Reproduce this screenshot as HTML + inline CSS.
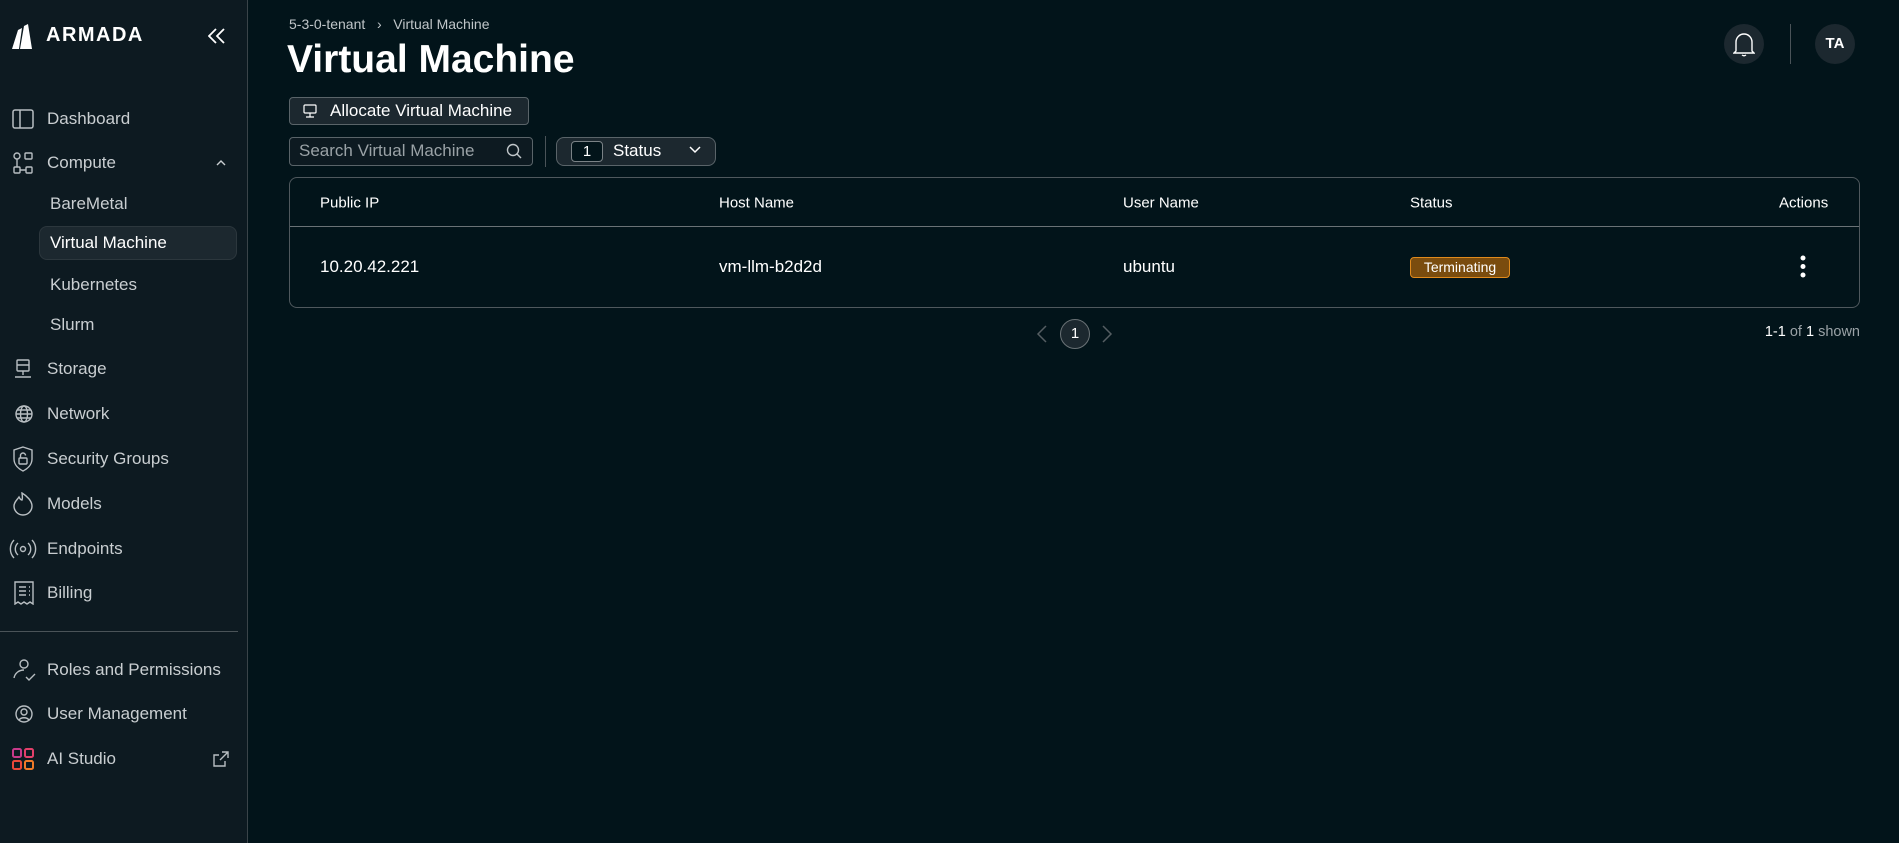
<!DOCTYPE html>
<html><head><meta charset="utf-8"><style>
*{box-sizing:border-box;margin:0;padding:0}
body{width:1899px;height:843px;background:#02141a;font-family:"Segoe UI","Liberation Sans",sans-serif;color:#fff;position:relative;overflow:hidden}
.side{position:absolute;left:0;top:0;width:248px;height:843px;background:#0d1a21;border-right:1px solid #3a4449}
.it{position:absolute;left:47px;font-size:17px;color:#c9ced1;transform:translateY(-50%);white-space:nowrap}
.ic{position:absolute;left:12px;transform:translateY(-50%)}
.sub{left:50px}
.abs{position:absolute}
.th{position:absolute;top:203px;transform:translateY(-50%);font-size:15px;color:#fff}
.td{position:absolute;top:267px;transform:translateY(-50%);font-size:17px;color:#fff}
</style></head><body>
<div class="side">
 <svg class="abs" style="left:10px;top:22px" width="30" height="28" viewBox="0 0 30 28"><path d="M2 27 L8 8 L12 6 L9 27Z M10 27 L14 4 L18 2 L22 27Z" fill="#fff"/></svg>
 <div class="abs" style="left:46px;top:24px;font-size:20px;font-weight:bold;letter-spacing:1.5px">ARMADA</div>
 <svg class="abs" style="left:208px;top:28px" width="18" height="16" viewBox="0 0 18 16" fill="none" stroke="#fff" stroke-width="1.8"><path d="M8 1 1 8l7 7M16 1 9 8l7 7"/></svg>
 <div class="abs" style="left:39px;top:226px;width:198px;height:34px;background:#1c282f;border:1px solid #2c373d;border-radius:8px"></div>
 <svg class="ic" style="top:119px" width="22" height="20" viewBox="0 0 22 20"><rect x="1" y="1" width="20" height="18" rx="2" fill="none" stroke="#b8bec2" stroke-width="1.5"/><line x1="8" y1="1" x2="8" y2="19" stroke="#b8bec2" stroke-width="1.5"/></svg>
 <div class="it" style="top:119px">Dashboard</div>
 <svg class="ic" style="top:163px" width="22" height="22" viewBox="0 0 22 22" fill="none" stroke="#b8bec2" stroke-width="1.4"><circle cx="5" cy="4" r="3"/><rect x="13" y="1" width="7" height="6" rx="1"/><rect x="2" y="15" width="6" height="6" rx="1"/><rect x="14" y="15" width="6" height="6" rx="1"/><path d="M5 7v8M8 18h6"/></svg>
 <div class="it" style="top:163px">Compute</div>
 <svg class="abs" style="left:216px;top:160px" width="10" height="6" viewBox="0 0 10 6" fill="none" stroke="#c9ced1" stroke-width="1.4"><path d="M1 5l4-4 4 4"/></svg>
 <div class="it sub" style="top:204px">BareMetal</div>
 <div class="it sub" style="top:243px;color:#fff">Virtual Machine</div>
 <div class="it sub" style="top:285px">Kubernetes</div>
 <div class="it sub" style="top:325px">Slurm</div>
 <svg class="ic" style="top:369px;left:14px" width="18" height="20" viewBox="0 0 18 20" fill="none" stroke="#b8bec2" stroke-width="1.4"><rect x="3" y="1" width="12" height="11" rx="1"/><path d="M3 6h12M9 12v4M1 18h16"/></svg>
 <div class="it" style="top:369px">Storage</div>
 <svg class="ic" style="top:414px;left:14px" width="20" height="20" viewBox="0 0 20 20" fill="none" stroke="#b8bec2" stroke-width="1.4"><circle cx="10" cy="10" r="8"/><ellipse cx="10" cy="10" rx="3.5" ry="8"/><path d="M2 10h16M3 6h14M3 14h14"/></svg>
 <div class="it" style="top:414px">Network</div>
 <svg class="ic" style="top:459px" width="22" height="26" viewBox="0 0 22 26" fill="none" stroke="#b8bec2" stroke-width="1.4"><path d="M11 1 L20 4 V13 C20 19 15 23 11 25 C7 23 2 19 2 13 V4Z"/><rect x="7" y="12" width="8" height="6" rx="1"/><path d="M8.5 12V9.5a2.5 2.5 0 0 1 5 0"/></svg>
 <div class="it" style="top:459px">Security Groups</div>
 <svg class="ic" style="top:504px" width="22" height="24" viewBox="0 0 22 24" fill="none" stroke="#b8bec2" stroke-width="1.4"><path d="M11 23a9 9 0 0 1-9-9c0-4 3-6 5-9 1 2 2 3 3 3 1-3 0-5 0-7 5 3 10 8 10 13a9 9 0 0 1-9 9z"/></svg>
 <div class="it" style="top:504px">Models</div>
 <svg class="ic" style="top:549px;left:9px" width="28" height="20" viewBox="0 0 28 20" fill="none" stroke="#b8bec2" stroke-width="1.4"><circle cx="14" cy="10" r="2.5"/><path d="M9 4a8 8 0 0 0 0 12M19 4a8 8 0 0 1 0 12M5 1a13 13 0 0 0 0 18M23 1a13 13 0 0 1 0 18"/></svg>
 <div class="it" style="top:549px">Endpoints</div>
 <svg class="ic" style="top:593px;left:14px" width="20" height="24" viewBox="0 0 20 24" fill="none" stroke="#b8bec2" stroke-width="1.4"><path d="M1 1h18v22l-3-2-3 2-3-2-3 2-3-2-3 2z"/><path d="M5 6h7M5 10h7M5 14h7M15 6h1M15 10h1M15 14h1"/></svg>
 <div class="it" style="top:593px">Billing</div>
 <div class="abs" style="left:0;top:631px;width:238px;height:1px;background:#4a5358"></div>
 <svg class="ic" style="top:670px" width="24" height="24" viewBox="0 0 24 24" fill="none" stroke="#b8bec2" stroke-width="1.4"><circle cx="12" cy="6" r="4"/><path d="M2 20c1-5 5-8 10-8M14 19l3 3 6-6"/></svg>
 <div class="it" style="top:670px">Roles and Permissions</div>
 <svg class="ic" style="top:714px;left:14px" width="20" height="20" viewBox="0 0 20 20" fill="none" stroke="#b8bec2" stroke-width="1.4"><circle cx="10" cy="10" r="8"/><circle cx="10" cy="8" r="3"/><path d="M5 16c2-3 8-3 10 0"/></svg>
 <div class="it" style="top:714px">User Management</div>
 <svg class="ic" style="top:759px" width="22" height="22" viewBox="0 0 22 22" fill="none" stroke-width="2"><rect x="1" y="1" width="8" height="8" rx="1.5" stroke="#c83a8a"/><rect x="13" y="1" width="8" height="8" rx="1.5" stroke="#e2406a"/><rect x="1" y="13" width="8" height="8" rx="1.5" stroke="#e8483a"/><rect x="13" y="13" width="8" height="8" rx="1.5" stroke="#f07a28"/></svg>
 <div class="it" style="top:759px">AI Studio</div>
 <svg class="abs" style="left:213px;top:751px" width="16" height="16" viewBox="0 0 16 16" fill="none" stroke="#b8bec2" stroke-width="1.4"><path d="M9 1h6v6M15 1 7 9M12 10v5H1V4h5"/></svg>
</div>

<div class="abs" style="left:289px;top:16px;font-size:14px;color:#c0c6c9">5-3-0-tenant &nbsp;&nbsp;&#8250;&nbsp;&nbsp; Virtual Machine</div>
<div class="abs" style="left:287px;top:38px;font-size:39px;font-weight:bold">Virtual Machine</div>
<div class="abs" style="left:289px;top:97px;width:240px;height:28px;background:#1c282f;border:1px solid #5a6469;border-radius:4px;font-size:17px;padding:3px 0 0 40px">Allocate Virtual Machine</div>
<svg class="abs" style="left:303px;top:104px" width="14" height="14" viewBox="0 0 14 14" fill="none" stroke="#fff" stroke-width="1.2"><rect x="1" y="1" width="12" height="8" rx="1"/><path d="M7 9v4M3 13h8"/></svg>
<div class="abs" style="left:289px;top:137px;width:244px;height:29px;border:1px solid #5a6469;border-radius:4px;background:#0d1a21;font-size:17px;color:#9aa2a6;padding:3px 0 0 9px">Search Virtual Machine</div>
<svg class="abs" style="left:506px;top:143px" width="16" height="16" viewBox="0 0 16 16" fill="none" stroke="#c0c6c9" stroke-width="1.4"><circle cx="7" cy="7" r="5.5"/><path d="M11 11l4 4"/></svg>
<div class="abs" style="left:545px;top:136px;width:1px;height:31px;background:#4a5358"></div>
<div class="abs" style="left:556px;top:137px;width:160px;height:29px;border:1px solid #5a6469;border-radius:8px;background:#1c282f"></div>
<div class="abs" style="left:571px;top:141px;width:32px;height:21px;border:1px solid #7a8286;border-radius:4px;background:#02141a;font-size:15px;text-align:center;line-height:19px">1</div>
<div class="abs" style="left:613px;top:141px;font-size:17px">Status</div>
<svg class="abs" style="left:689px;top:146px" width="12" height="8" viewBox="0 0 12 8" fill="none" stroke="#fff" stroke-width="1.5"><path d="M1 1l5 5 5-5"/></svg>

<div class="abs" style="left:289px;top:177px;width:1571px;height:131px;border:1px solid #4f585d;border-radius:8px"></div>
<div class="abs" style="left:290px;top:226px;width:1569px;height:1px;background:#6a7276"></div>
<div class="th" style="left:320px">Public IP</div>
<div class="th" style="left:719px">Host Name</div>
<div class="th" style="left:1123px">User Name</div>
<div class="th" style="left:1410px">Status</div>
<div class="th" style="left:1779px">Actions</div>
<div class="td" style="left:320px">10.20.42.221</div>
<div class="td" style="left:719px">vm-llm-b2d2d</div>
<div class="td" style="left:1123px">ubuntu</div>
<div class="abs" style="left:1410px;top:257px;width:100px;height:21px;background:#7a4c0e;border:1px solid #e08a1c;border-radius:4px;font-size:14px;text-align:center;line-height:19px">Terminating</div>
<svg class="abs" style="left:1800px;top:255px" width="6" height="24" viewBox="0 0 6 24" fill="#fff"><circle cx="3" cy="3" r="2.5"/><circle cx="3" cy="11.5" r="2.5"/><circle cx="3" cy="20" r="2.5"/></svg>

<svg class="abs" style="left:1036px;top:325px" width="12" height="18" viewBox="0 0 12 18" fill="none" stroke="#555e62" stroke-width="1.5"><path d="M10 1 2 9l8 8"/></svg>
<div class="abs" style="left:1060px;top:319px;width:30px;height:30px;border-radius:50%;background:#1c282f;border:1px solid #6a7276;font-size:15px;text-align:center;line-height:28px">1</div>
<svg class="abs" style="left:1101px;top:325px" width="12" height="18" viewBox="0 0 12 18" fill="none" stroke="#555e62" stroke-width="1.5"><path d="M2 1l8 8-8 8"/></svg>
<div class="abs" style="right:39px;top:324px;font-size:14.5px;color:#9aa2a6"><span style="color:#fff">1-1</span> of <span style="color:#fff">1</span> shown</div>

<div class="abs" style="left:1724px;top:24px;width:40px;height:40px;border-radius:50%;background:#1c282f"></div>
<svg class="abs" style="left:1733px;top:30px" width="22" height="28" viewBox="0 0 22 28" fill="none" stroke="#fff" stroke-width="1.4"><path d="M3 21V12a8 8 0 0 1 16 0v9l2 2H1z"/><path d="M9 25q2 1.5 4 0"/></svg>
<div class="abs" style="left:1790px;top:24px;width:1px;height:40px;background:#4a5358"></div>
<div class="abs" style="left:1815px;top:24px;width:40px;height:40px;border-radius:50%;background:#1c282f;font-size:15px;font-weight:bold;text-align:center;line-height:40px">TA</div>
</body></html>
